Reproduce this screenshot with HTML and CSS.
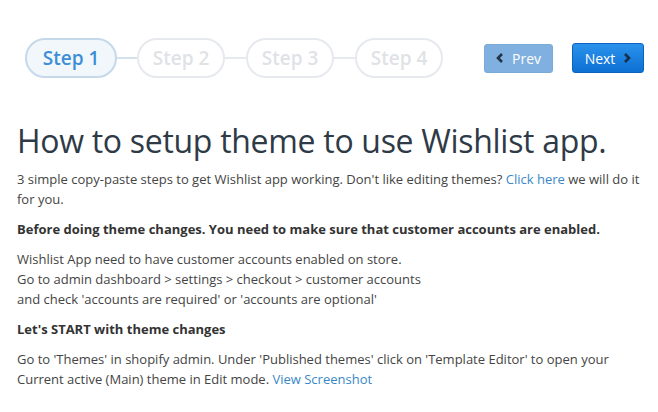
FILE: index.html
```html
<!DOCTYPE html>
<html lang="en">
<head>
	<meta charset="UTF-8">
	<title>Wishlist setup</title>
	<link rel="stylesheet" href="styles.css">
</head>
<body>
	<div class="wizard">
		<div class="wizard-head">
			<ul class="steps">
				<li class="step active">Step 1</li>
				<li class="step-line"></li>
				<li class="step">Step 2</li>
				<li class="step-line"></li>
				<li class="step">Step 3</li>
				<li class="step-line"></li>
				<li class="step">Step 4</li>
			</ul>
			<div class="nav">
				<a class="btn btn-prev" href="javascript:;">
					<svg width="8" height="10" viewBox="0 0 8 10"><path d="M6 1 L2 5 L6 9" fill="none" stroke="currentColor" stroke-width="2.6"/></svg>
					Prev
				</a>
				<a class="btn btn-next" href="javascript:;">
					Next
					<svg width="8" height="10" viewBox="0 0 8 10"><path d="M2 1 L6 5 L2 9" fill="none" stroke="currentColor" stroke-width="2.6"/></svg>
				</a>
			</div>
		</div>

		<h1>How to setup theme to use Wishlist app.</h1>
		<p>3 simple copy-paste steps to get Wishlist app working. Don't like editing themes? <a href="javascript:;">Click here</a> we will do it for you.</p>
		<p class="strong">Before doing theme changes. You need to make sure that customer accounts are enabled.</p>
		<p>Wishlist App need to have customer accounts enabled on store.<br>
		Go to admin dashboard &gt; settings &gt; checkout &gt; customer accounts<br>
		and check 'accounts are required' or 'accounts are optional'</p>
		<p class="strong">Let's START with theme changes</p>
		<p>Go to 'Themes' in shopify admin. Under 'Published themes' click on 'Template Editor' to open your Current active (Main) theme in Edit mode. <a href="javascript:;">View Screenshot</a></p>
	</div>
</body>
</html>
```

FILE: styles.css
```css
body {
	margin: 0;
	background: #fff;
	font-family: "Open Sans", sans-serif;
	color: #444;
}
.wizard {
	padding: 38px 14px 0 17px;
}
.wizard-head {
	display: flex;
	justify-content: space-between;
	align-items: center;
	margin-left: 8px;
}
.steps {
	display: flex;
	align-items: center;
	list-style: none;
	margin: 0;
	padding: 0;
}
.step {
	box-sizing: border-box;
	width: 88px;
	height: 40px;
	line-height: 36px;
	border: 2px solid #e6e9ee;
	border-radius: 20px;
	text-align: center;
	font-size: 19px;
	font-weight: 600;
	color: #dfe2e6;
}
.step.active {
	width: 92px;
	border-color: #c5d9ea;
	background: #f2f7fb;
	color: #3c8fd6;
}
.step-line {
	width: 21px;
	height: 2px;
	background: #e6e9ee;
}
.step.active + .step-line {
	width: 20px;
	background: #d4e2ee;
}
.nav {
	display: flex;
	gap: 19px;
	align-items: center;
}
.btn {
	display: flex;
	align-items: center;
	justify-content: center;
	gap: 8px;
	box-sizing: border-box;
	height: 30px;
	border-radius: 3px;
	font-size: 14px;
	text-decoration: none;
	color: #fff;
}
.btn-prev {
	width: 69px;
	height: 29px;
	background: #7fb0e0;
	border: 1px solid #79aad8;
}
.btn-prev svg {
	color: #233247;
}
.btn-next {
	width: 72px;
	background: linear-gradient(#2b92ec, #0c70d4);
	border: 1px solid #0b63bd;
}
.btn-next svg {
	color: #173048;
}
h1 {
	margin: 41px 0 6px;
	font-size: 32px;
	font-weight: 400;
	line-height: 44px;
	letter-spacing: -0.3px;
	color: #2f3a47;
}
p {
	margin: 0 0 10px;
	font-size: 13px;
	line-height: 20px;
}
p.strong {
	font-weight: 700;
	color: #333;
}
a {
	color: #3a88c7;
	text-decoration: none;
}
```
